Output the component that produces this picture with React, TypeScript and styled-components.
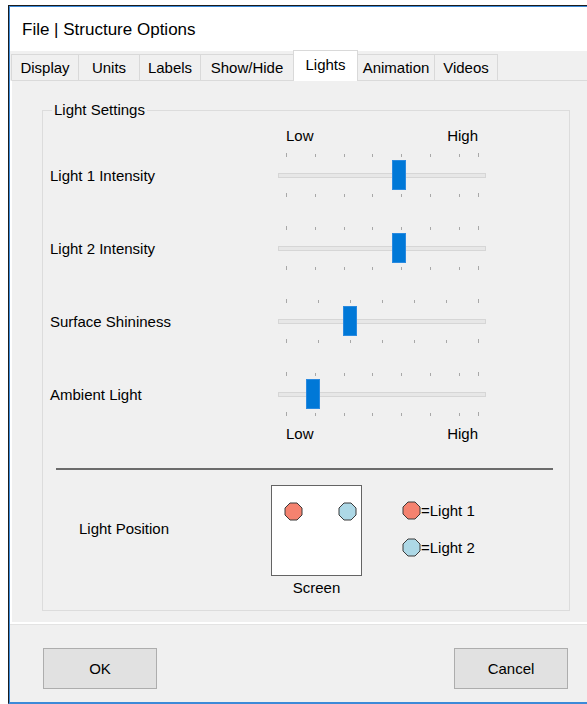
import React from "react";
import styled, { createGlobalStyle } from "styled-components";

const GlobalStyle = createGlobalStyle`
  html, body {
    margin: 0;
    padding: 0;
    background: #ffffff;
    overflow: hidden;
  }
  body {
    font-family: "Liberation Sans", Arial, sans-serif;
    color: #000;
  }
`;

type SliderSpec = {
  label: string;
  max: number;
  step: number;
  value: number;
};

const sliders: SliderSpec[] = [
  { label: "Light 1 Intensity", max: 100, step: 15, value: 59 },
  { label: "Light 2 Intensity", max: 100, step: 15, value: 59 },
  { label: "Surface Shininess", max: 60, step: 10, value: 20 },
  { label: "Ambient Light", max: 100, step: 15, value: 14 },
];

const tabs = [
  { name: "Display", width: 68 },
  { name: "Units", width: 62 },
  { name: "Labels", width: 62 },
  { name: "Show/Hide", width: 94 },
  { name: "Lights", width: 65 },
  { name: "Animation", width: 78 },
  { name: "Videos", width: 64 },
];

// track runs 208px wide, ticks sit 8px in from each end
const TICK_INSET = 8;
const TICK_SPAN = 192;

const tickValues = (max: number, step: number) => {
  const out: number[] = [];
  for (let v = 0; v < max; v += step) out.push(v);
  out.push(max);
  return out;
};

const Octagon = ({ fill }: { fill: string }) => (
  <svg width="19" height="19" viewBox="0 0 19 19">
    <polygon
      points="6,1 13,1 18,6 18,13 13,18 6,18 1,13 1,6"
      fill={fill}
      stroke="#3a3a3a"
      strokeWidth="1"
    />
  </svg>
);

const TrackBar = ({ spec }: { spec: SliderSpec }) => {
  const ticks = tickValues(spec.max, spec.step);
  const pos = (v: number) => TICK_INSET + (TICK_SPAN * v) / spec.max;
  return (
    <Bar>
      {ticks.map((t, i) => {
        const end = i === 0 || i === ticks.length - 1;
        return (
          <React.Fragment key={t}>
            <Tick $top $long={end} style={{ left: Math.round(pos(t)) }} />
            <Tick $long={end} style={{ left: Math.round(pos(t)) }} />
          </React.Fragment>
        );
      })}
      <Track />
      <Thumb style={{ left: Math.round(pos(spec.value)) - 7 }} />
    </Bar>
  );
};

const App = () => {
  return (
    <>
      <GlobalStyle />
      <Window>
        <TitleBar>File | Structure Options</TitleBar>
        <TabStrip>
          {tabs.map((t) => (
            <Tab key={t.name} $width={t.width} $active={t.name === "Lights"}>
              {t.name}
            </Tab>
          ))}
        </TabStrip>
        <Panel>
          <Group>
            <Legend>Light Settings</Legend>
            <ScaleRow $gap={6}>
              <span>Low</span>
              <span>High</span>
            </ScaleRow>
            <SliderList>
              {sliders.map((s) => (
                <SliderRow key={s.label}>
                  <RowLabel>{s.label}</RowLabel>
                  <TrackBar spec={s} />
                </SliderRow>
              ))}
            </SliderList>
            <ScaleRow $gap={7}>
              <span>Low</span>
              <span>High</span>
            </ScaleRow>
            <Divider />
            <PositionRow>
              <PositionLabel>Light Position</PositionLabel>
              <ScreenBlock>
                <ScreenBox>
                  <Lamp $x={12} $y={16}>
                    <Octagon fill="#f4826f" />
                  </Lamp>
                  <Lamp $x={66} $y={16}>
                    <Octagon fill="#add8e6" />
                  </Lamp>
                </ScreenBox>
                <Caption>Screen</Caption>
              </ScreenBlock>
              <Key>
                <KeyItem>
                  <Octagon fill="#f4826f" />
                  <span>=Light 1</span>
                </KeyItem>
                <KeyItem>
                  <Octagon fill="#add8e6" />
                  <span>=Light 2</span>
                </KeyItem>
              </Key>
            </PositionRow>
          </Group>
        </Panel>
        <Footer>
          <Button>OK</Button>
          <Button>Cancel</Button>
        </Footer>
      </Window>
    </>
  );
};

export default App;

const Window = styled.div`
  margin: 5px 0 0 8px;
  width: 620px;
  height: 699px;
  box-sizing: border-box;
  border: 1px solid #1c1c1c;
  border-right: none;
  border-bottom-color: #3c8ad8;
  box-shadow: inset 1px 1px 0 #3c8ad8, inset 0 -1px 0 #3c8ad8;
  padding: 1px 0 1px 1px;
  background: #f0f0f0;
  display: flex;
  flex-direction: column;
`;

const TitleBar = styled.div`
  height: 44px;
  background: #ffffff;
  padding-left: 12px;
  display: flex;
  align-items: center;
  font-size: 17px;
  padding-top: 2px;
  box-sizing: border-box;
`;

const TabStrip = styled.div`
  height: 29px;
  display: flex;
  align-items: flex-end;
  padding-left: 1px;
  position: relative;
  z-index: 1;
`;

const Tab = styled.div<{ $width: number; $active?: boolean }>`
  width: ${(p) => p.$width}px;
  height: ${(p) => (p.$active ? 31 : 26)}px;
  margin-bottom: ${(p) => (p.$active ? -1 : 0)}px;
  box-sizing: border-box;
  border: 1px solid #d9d9d9;
  border-bottom: none;
  margin-right: -1px;
  background: ${(p) => (p.$active ? "#ffffff" : "#f0f0f0")};
  font-size: 15px;
  display: flex;
  justify-content: center;
  align-items: center;
  padding-bottom: ${(p) => (p.$active ? 4 : 0)}px;
`;

const Panel = styled.div`
  height: 544px;
  box-sizing: border-box;
  border-top: 1px solid #dadada;
  border-left: 2px solid #ffffff;
  border-bottom: 2px solid #ffffff;
  box-shadow: 0 1px 0 #e3e3e3;
  padding: 20px 0 0 30px;
`;

const Group = styled.fieldset`
  margin: 0;
  padding: 0 0 0 7px;
  width: 528px;
  height: 510px;
  box-sizing: border-box;
  border: 1px solid #dcdcdc;
  font-size: 15px;
`;

const Legend = styled.legend`
  margin-left: 2px;
  padding: 0 2px;
  line-height: 18px;
  font-size: 15px;
`;

const ScaleRow = styled.div<{ $gap: number }>`
  margin-left: 236px;
  width: 192px;
  height: 20px;
  margin-top: ${(p) => p.$gap}px;
  display: flex;
  justify-content: space-between;
  align-items: center;
`;

const SliderList = styled.div`
  display: flex;
  flex-direction: column;
  gap: 27px;
  margin-top: 7px;
  margin-bottom: -1px;
`;

const SliderRow = styled.div`
  display: grid;
  grid-template-columns: 228px 208px;
  align-items: center;
`;

const RowLabel = styled.div`
  font-size: 15px;
`;

const Bar = styled.div`
  position: relative;
  width: 208px;
  height: 46px;
`;

const Tick = styled.div<{ $top?: boolean; $long?: boolean }>`
  position: absolute;
  width: 1px;
  height: ${(p) => (p.$long ? 4 : 3)}px;
  background: #a8a8a8;
  ${(p) =>
    p.$top
      ? `top: ${p.$long ? 1 : 2}px;`
      : `top: ${p.$long ? 41 : 42}px;`}
`;

const Track = styled.div`
  position: absolute;
  left: 0;
  right: 0;
  top: 21px;
  height: 5px;
  box-sizing: border-box;
  background: #e7e7e7;
  border: 1px solid #d6d6d6;
`;

const Thumb = styled.div`
  position: absolute;
  top: 8px;
  width: 14px;
  height: 30px;
  box-sizing: border-box;
  background: #0078d7;
  border: 1px solid #2a8ae0;
`;

const Divider = styled.div`
  margin: 25px 16px 0 6px;
  height: 2px;
  background: #6b6b6b;
`;

const PositionRow = styled.div`
  display: flex;
  align-items: flex-start;
  margin-top: 15px;
`;

const PositionLabel = styled.div`
  width: 192px;
  padding-left: 29px;
  margin-top: 35px;
  font-size: 15px;
`;

const ScreenBlock = styled.div`
  display: flex;
  flex-direction: column;
  align-items: center;
`;

const ScreenBox = styled.div`
  position: relative;
  width: 91px;
  height: 91px;
  box-sizing: border-box;
  background: #ffffff;
  border: 1px solid #646464;
`;

const Lamp = styled.div<{ $x: number; $y: number }>`
  position: absolute;
  left: ${(p) => p.$x}px;
  top: ${(p) => p.$y}px;
  width: 19px;
  height: 19px;
  svg {
    display: block;
  }
`;

const Caption = styled.div`
  margin-top: 3px;
  font-size: 15px;
`;

const Key = styled.div`
  margin-left: 40px;
  margin-top: 16px;
  display: flex;
  flex-direction: column;
  gap: 18px;
`;

const KeyItem = styled.div`
  display: flex;
  align-items: center;
  font-size: 15px;
  svg {
    display: block;
  }
`;

const Footer = styled.div`
  flex: 1;
  padding: 24px 0 0 33px;
  width: 525px;
  display: flex;
  justify-content: space-between;
  align-items: flex-start;
`;

const Button = styled.button`
  height: 41px;
  width: 114px;
  box-sizing: border-box;
  background: #e1e1e1;
  border: 1px solid #adadad;
  border-radius: 0;
  font-family: "Liberation Sans", Arial, sans-serif;
  font-size: 15px;
  color: #000;
  padding: 0;
`;
